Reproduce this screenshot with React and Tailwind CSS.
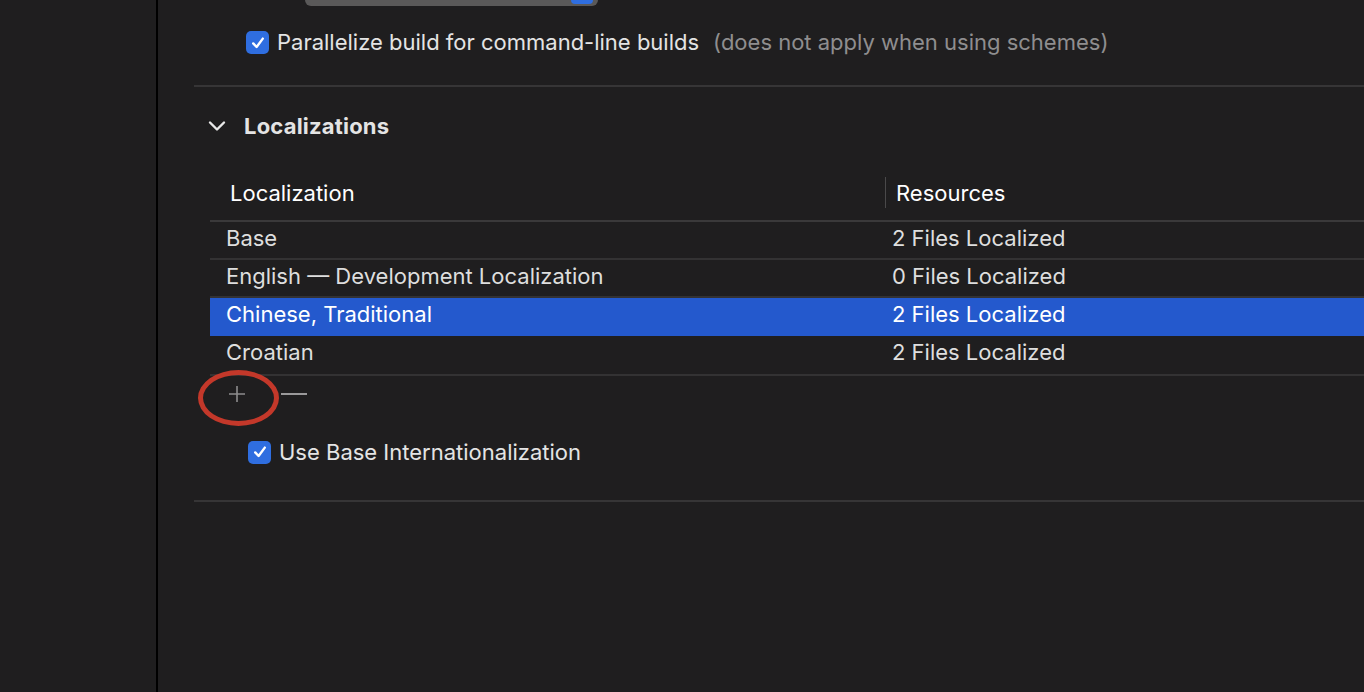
const font = { fontFamily: 'Inter, "Noto Sans", sans-serif' };

const Check = ({ className = '' }) => (
    <div className={`w-[23px] h-[23px] rounded-[5px] bg-[#2f6ee0] flex items-center justify-center shrink-0 ${className}`}>
        <svg width="16" height="16" viewBox="0 0 16 16" fill="none">
            <path d="M3.2 8.4 L6.6 12 L12.8 3.6" stroke="white" strokeWidth="2.4" strokeLinecap="round" strokeLinejoin="round" />
        </svg>
    </div>
);

const rows = [
    { name: 'Base', res: '2 Files Localized' },
    { name: 'English — Development Localization', res: '0 Files Localized' },
    { name: 'Chinese, Traditional', res: '2 Files Localized', selected: true },
    { name: 'Croatian', res: '2 Files Localized' },
];

export default function App() {
    return (
        <div className="w-[1364px] h-[692px] flex bg-[#1f1e1f] text-[#dedede] overflow-hidden" style={font}>
            <div className="w-[156px] shrink-0 bg-[#1f1e1f]" />
            <div className="w-[2px] shrink-0 bg-black" />
            <div className="flex-1 flex flex-col pl-[36px]">
                {/* popup button cut off at the top */}
                <div className="ml-[111px] w-[293px] h-[6px] rounded-b-[6px] bg-[#5a5959] flex justify-end pr-[5px]">
                    <div className="w-[22px] h-[4px] rounded-b-[4px] bg-[#2f6ee0]" />
                </div>

                <div className="h-[81px] flex items-start pt-[20px] pl-[52px] border-b-2 border-[#363536] text-[22px]">
                    <div className="flex items-center">
                        <Check />
                        <span className="ml-[8px] text-[#e4e4e4]">Parallelize build for command-line builds</span>
                        <span className="ml-[14px] text-[#8f8e8f]">(does not apply when using schemes)</span>
                    </div>
                </div>

                <div className="h-[77px] flex items-center pl-[14px] pt-[1px]">
                    <svg width="18" height="12" viewBox="0 0 18 12" fill="none">
                        <path d="M2 2.5 L9 9.5 L16 2.5" stroke="#e8e8e8" strokeWidth="2.4" strokeLinecap="round" strokeLinejoin="round" />
                    </svg>
                    <span className="ml-[18px] text-[22px] font-bold text-[#e4e4e4] tracking-[0.2px]">Localizations</span>
                </div>

                <div className="ml-[16px] flex flex-col text-[22px]">
                    <div className="h-[58px] flex items-center border-b-2 border-[#3a393a] text-white">
                        <div className="w-[675px] pl-[20px] pt-[2px]">Localization</div>
                        <div className="w-[1px] h-[31px] bg-[#4a494a]" />
                        <div className="pl-[10px] pt-[2px]">Resources</div>
                    </div>
                    {rows.map((r, i) => (
                        <div
                            key={r.name}
                            className={`${i === 3 ? 'h-[40px]' : 'h-[38px]'} flex items-center ${i === 3 ? 'pb-[5px]' : 'pb-[3px]'} ${r.selected ? 'bg-[#2459cd] text-white border-b-2 border-[#2459cd]' : 'border-b-2 border-[#333233]'}`}
                        >
                            <div className="w-[682px] pl-[16px]">{r.name}</div>
                            <div>{r.res}</div>
                        </div>
                    ))}
                    <div className="h-[36px] flex items-center pl-[17px] relative">
                        <svg width="20" height="20" viewBox="0 0 20 20" fill="none">
                            <path d="M10 2 V18 M2 10 H18" stroke="#8d8c8d" strokeWidth="1.6" />
                        </svg>
                        <svg className="ml-[33px]" width="28" height="20" viewBox="0 0 28 20" fill="none">
                            <path d="M1 10 H27" stroke="#9a999a" strokeWidth="2" />
                        </svg>
                        <div className="absolute left-[-12px] top-[-6px] w-[81px] h-[56px] rounded-[50%] border-[5px] border-[#c3382a]" />
                    </div>
                    <div className="h-[88px] flex items-center pl-[38px] pt-[5px] pb-[13px]">
                        <Check />
                        <span className="ml-[8px] text-[#e4e4e4]">Use Base Internationalization</span>
                    </div>
                </div>
                <div className="h-[2px] bg-[#363536]" />
            </div>
        </div>
    );
}
